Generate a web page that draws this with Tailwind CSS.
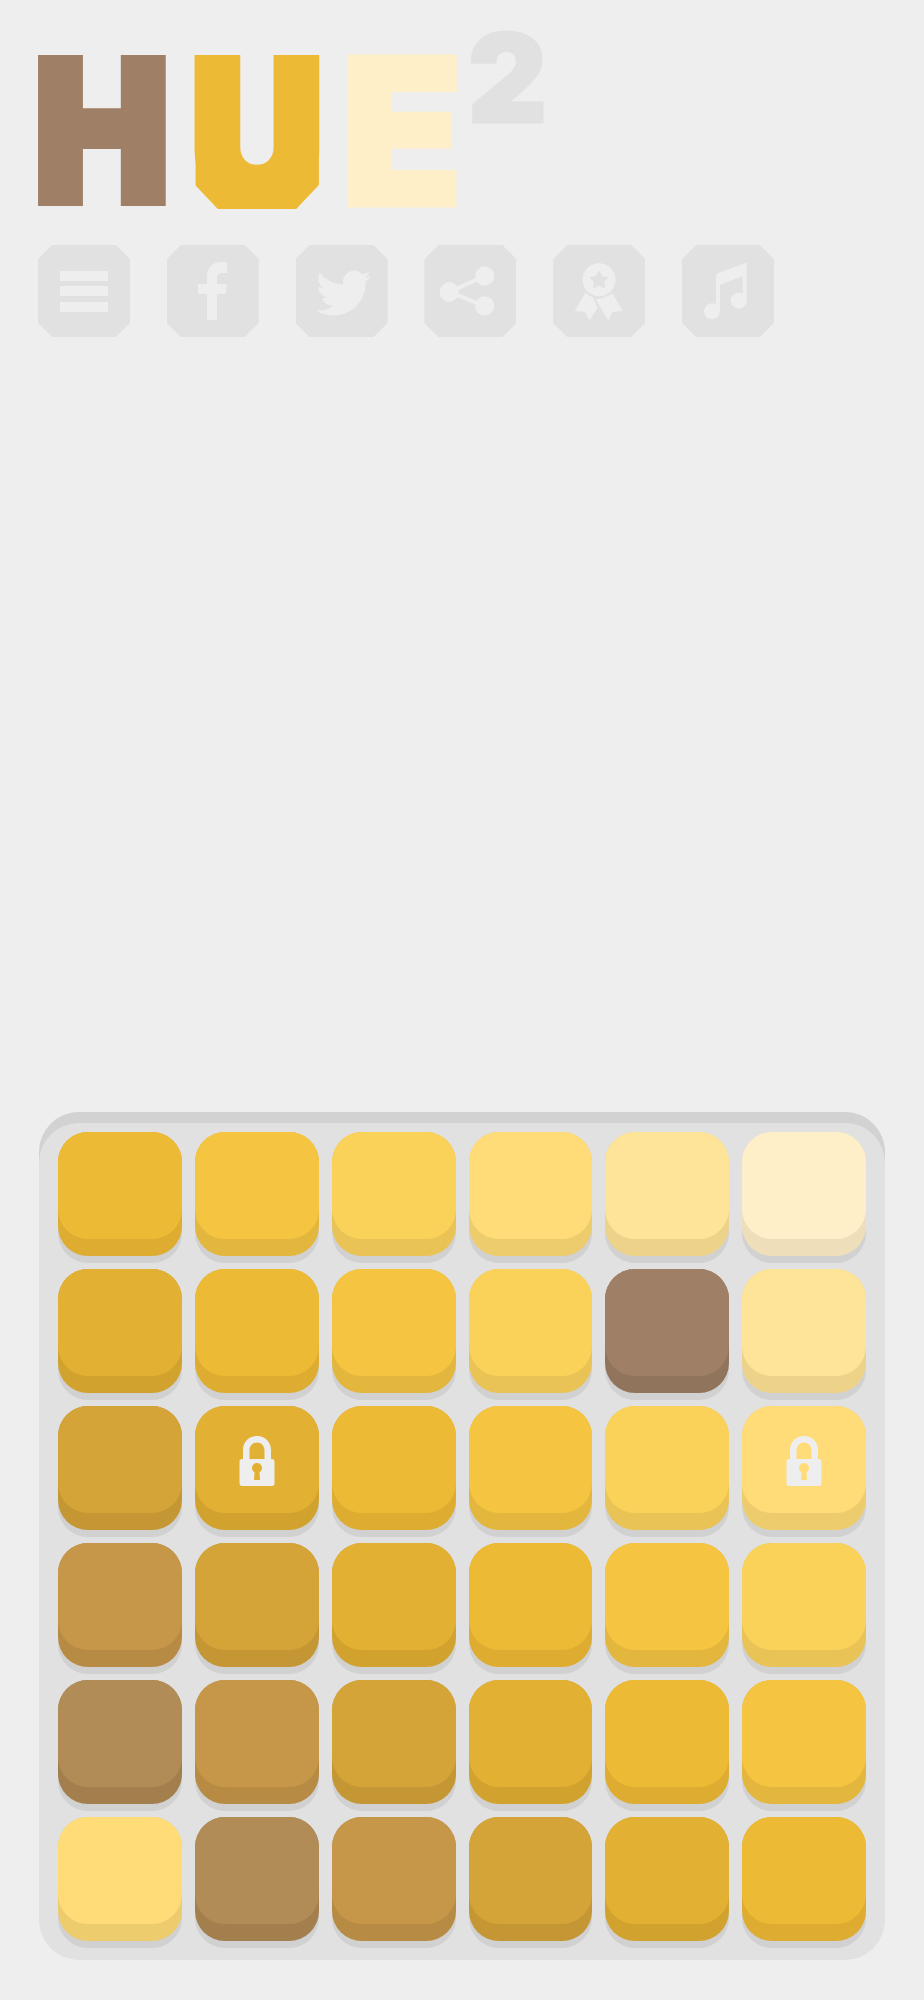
<!DOCTYPE html>
<html lang="en">
<head>
    <meta charset="UTF-8">
    <meta name="viewport" content="width=device-width, initial-scale=1.0">
    <title>Hue 2</title>
    <script src="https://cdn.jsdelivr.net/npm/@tailwindcss/browser@4"></script>
</head>
<body class="bg-[#eeeeee] font-['Inter',sans-serif]">
    <div class="h-[2000px] flex flex-col overflow-hidden">
        <!-- Logo -->
        <div class="flex items-start pt-[32px] pl-[38px] h-[245px] font-black leading-none">
            <div class="flex mt-[23px] h-[152px] text-[194px] leading-[152px]">
                <span class="w-[128px] flex justify-center scale-x-[.93] [-webkit-text-stroke-width:10px] text-[#9f7f66]">H</span>
                <span class="relative w-[124px] ml-[29px] flex justify-center scale-x-[.945] [-webkit-text-stroke-width:10px] text-[#edba35]">U<span class="absolute -left-[3.5px] -right-[3.5px] -bottom-[2px] h-[73px] bg-[#edba35] [clip-path:polygon(0_0,30px_0,30px_36px,calc(100%-30px)_36px,calc(100%-30px)_0,100%_0,100%_49px,calc(100%-24px)_100%,24px_100%,0_49px)]"></span></span>
                <span class="w-[108px] ml-[29px] flex justify-center text-[204px] scale-x-[.97] [-webkit-text-stroke-width:5px] text-[#feefc9]">E</span>
            </div>
            <span class="w-[73px] ml-[15px] h-[92px] flex justify-center text-[122px] leading-[92px] [-webkit-text-stroke-width:3px] text-[#e1e1e1]">2</span>
        </div>

        <!-- Icon buttons -->
        <nav class="flex gap-[36.8px] pl-[38px] text-[#eeeeee]">
            <div class="w-[92px] h-[92px] bg-[#e1e1e1] [clip-path:polygon(14px_0,78px_0,92px_14px,92px_78px,78px_92px,14px_92px,0_78px,0_14px)]">
                <svg viewBox="0 0 92 92" class="w-full h-full" fill="currentColor"><path d="M22 26h48v10H22zM22 41h48v10H22zM22 57h48v10H22z"/></svg>
            </div>
            <div class="w-[92px] h-[92px] bg-[#e1e1e1] [clip-path:polygon(14px_0,78px_0,92px_14px,92px_78px,78px_92px,14px_92px,0_78px,0_14px)]">
                <svg viewBox="0 0 92 92" class="w-full h-full" fill="currentColor"><path d="M40 75V49h-9V39h9v-7c0-10 6-15 14-15h6v11h-5c-4 0-5 2-5 5v6h10l-1.500 10H50v26z"/></svg>
            </div>
            <div class="w-[92px] h-[92px] bg-[#e1e1e1] [clip-path:polygon(14px_0,78px_0,92px_14px,92px_78px,78px_92px,14px_92px,0_78px,0_14px)]">
                <svg viewBox="0 0 92 92" class="w-full h-full" fill="currentColor"><path transform="translate(20 20.500) scale(2.300)" d="M23.953 4.570a10 10 0 01-2.825.775 4.958 4.958 0 002.163-2.723c-.951.555-2.005.959-3.127 1.184a4.920 4.920 0 00-8.384 4.482C7.690 8.095 4.067 6.130 1.640 3.162a4.822 4.822 0 00-.666 2.475c0 1.710.870 3.213 2.188 4.096a4.904 4.904 0 01-2.228-.616v.060a4.923 4.923 0 003.946 4.827 4.996 4.996 0 01-2.212.085 4.936 4.936 0 004.604 3.417 9.867 9.867 0 01-6.102 2.105c-.390 0-.779-.023-1.170-.067a13.995 13.995 0 007.557 2.209c9.053 0 13.998-7.496 13.998-13.985 0-.210 0-.420-.015-.630A9.935 9.935 0 0024 4.590z"/></svg>
            </div>
            <div class="w-[92px] h-[92px] bg-[#e1e1e1] [clip-path:polygon(14px_0,78px_0,92px_14px,92px_78px,78px_92px,14px_92px,0_78px,0_14px)]">
                <svg viewBox="0 0 92 92" class="w-full h-full" fill="currentColor"><circle cx="25.300" cy="47" r="9.700"/><circle cx="60.700" cy="31" r="9.700"/><circle cx="60.700" cy="61" r="9.700"/><path d="M25.300 47L60.700 31M25.300 47L60.700 61" stroke="currentColor" stroke-width="4"/></svg>
            </div>
            <div class="w-[92px] h-[92px] bg-[#e1e1e1] [clip-path:polygon(14px_0,78px_0,92px_14px,92px_78px,78px_92px,14px_92px,0_78px,0_14px)]">
                <svg viewBox="0 0 92 92" class="w-full h-full" fill="currentColor">
                    <circle cx="46" cy="34.700" r="16.500"/>
                    <path d="M46 27l2.400 5 5.400.700-3.900 3.800 1 5.400L46 39.300 41.100 41.900l1-5.400-3.900-3.800 5.400-.700z" fill="#e1e1e1" stroke="#e1e1e1" stroke-width="2" stroke-linejoin="round"/>
                    <path d="M32.700 48c2 2.500 5 4 7.300 5l4 10-7.300 11.700-5-8.400-9.400-.600z" stroke="currentColor" stroke-linejoin="round"/>
                    <path d="M43.300 54.700c6-1 11-2.500 16-5.700l10 16.700-10 .600-4 8.400z" stroke="currentColor" stroke-linejoin="round"/>
                </svg>
            </div>
            <div class="w-[92px] h-[92px] bg-[#e1e1e1] [clip-path:polygon(14px_0,78px_0,92px_14px,92px_78px,78px_92px,14px_92px,0_78px,0_14px)]">
                <svg viewBox="0 0 92 92" class="w-full h-full" fill="currentColor"><circle cx="30" cy="66.300" r="8"/><circle cx="56.700" cy="55.700" r="8"/><path d="M34 29L63 18q1.700-.500 1.700 1.500V56h-4V31.300L38 39.700V66h-4z"/></svg>
            </div>
        </nav>

        <!-- Board -->
        <div class="mt-auto mb-[40px] ml-[39px] w-[846px] rounded-[40px] bg-[#e1e1e1] shadow-[inset_0_11px_0_#d2d2d2] pt-[20px] px-[19px] pb-[19px]">
            <div class="grid grid-cols-6 gap-[13px]">
                <!-- Row 1 -->
                <div class="h-[124px] rounded-[30px] bg-[#ddac30] shadow-[0_7px_0_#d1d1d1]"><div class="h-[107px] rounded-[30px] bg-[#edba35]"></div></div>
                <div class="h-[124px] rounded-[30px] bg-[#e3b63e] shadow-[0_7px_0_#d1d1d1]"><div class="h-[107px] rounded-[30px] bg-[#f5c541]"></div></div>
                <div class="h-[124px] rounded-[30px] bg-[#e9c355] shadow-[0_7px_0_#d1d1d1]"><div class="h-[107px] rounded-[30px] bg-[#fad25a]"></div></div>
                <div class="h-[124px] rounded-[30px] bg-[#edcc6e] shadow-[0_7px_0_#d1d1d1]"><div class="h-[107px] rounded-[30px] bg-[#ffdc78]"></div></div>
                <div class="h-[124px] rounded-[30px] bg-[#edd38a] shadow-[0_7px_0_#d1d1d1]"><div class="h-[107px] rounded-[30px] bg-[#fee498]"></div></div>
                <div class="h-[124px] rounded-[30px] bg-[#eedfba] shadow-[0_7px_0_#d1d1d1]"><div class="h-[107px] rounded-[30px] bg-[#feefc9]"></div></div>
                <!-- Row 2 -->
                <div class="h-[124px] rounded-[30px] bg-[#d1a22e] shadow-[0_7px_0_#d1d1d1]"><div class="h-[107px] rounded-[30px] bg-[#e2b033]"></div></div>
                <div class="h-[124px] rounded-[30px] bg-[#ddac30] shadow-[0_7px_0_#d1d1d1]"><div class="h-[107px] rounded-[30px] bg-[#edba35]"></div></div>
                <div class="h-[124px] rounded-[30px] bg-[#e3b63e] shadow-[0_7px_0_#d1d1d1]"><div class="h-[107px] rounded-[30px] bg-[#f5c541]"></div></div>
                <div class="h-[124px] rounded-[30px] bg-[#e9c355] shadow-[0_7px_0_#d1d1d1]"><div class="h-[107px] rounded-[30px] bg-[#fad25a]"></div></div>
                <div class="h-[124px] rounded-[30px] bg-[#91745c] shadow-[0_7px_0_#d1d1d1]"><div class="h-[107px] rounded-[30px] bg-[#9f7f66]"></div></div>
                <div class="h-[124px] rounded-[30px] bg-[#edd38a] shadow-[0_7px_0_#d1d1d1]"><div class="h-[107px] rounded-[30px] bg-[#fee498]"></div></div>
                <!-- Row 3 -->
                <div class="h-[124px] rounded-[30px] bg-[#c49634] shadow-[0_7px_0_#d1d1d1]"><div class="h-[107px] rounded-[30px] bg-[#d4a439]"></div></div>
                <div class="h-[124px] rounded-[30px] bg-[#d1a22e] shadow-[0_7px_0_#d1d1d1]">
                    <div class="h-[107px] rounded-[30px] bg-[#e2b033] flex justify-center pt-[30px] text-[#eeeeee]">
                        <svg viewBox="0 0 36 50" class="w-[36px] h-[50px]" fill="currentColor"><path fill-rule="evenodd" d="M4 23V14C4 6 10 0 18 0s14 6 14 14v9h1c1.500 0 2.500 1 2.500 2.500v22c0 1.500-1 2.500-2.500 2.500H3c-1.500 0-2.500-1-2.500-2.500v-22C.5 24 1.500 23 3 23zM10.500 23h15v-8.500c0-4.500-3.300-8-7.500-8s-7.500 3.500-7.500 8zM18 27c-2.800 0-5 2.200-5 5 0 1.800 1 3.400 2.500 4.300L15 44h6l-.5-7.700c1.500-.9 2.500-2.500 2.500-4.300 0-2.800-2.200-5-5-5z"/></svg>
                    </div>
                </div>
                <div class="h-[124px] rounded-[30px] bg-[#ddac30] shadow-[0_7px_0_#d1d1d1]"><div class="h-[107px] rounded-[30px] bg-[#edba35]"></div></div>
                <div class="h-[124px] rounded-[30px] bg-[#e3b63e] shadow-[0_7px_0_#d1d1d1]"><div class="h-[107px] rounded-[30px] bg-[#f5c541]"></div></div>
                <div class="h-[124px] rounded-[30px] bg-[#e9c355] shadow-[0_7px_0_#d1d1d1]"><div class="h-[107px] rounded-[30px] bg-[#fad25a]"></div></div>
                <div class="h-[124px] rounded-[30px] bg-[#edcc6e] shadow-[0_7px_0_#d1d1d1]">
                    <div class="h-[107px] rounded-[30px] bg-[#ffdc78] flex justify-center pt-[30px] text-[#eeeeee]">
                        <svg viewBox="0 0 36 50" class="w-[36px] h-[50px]" fill="currentColor"><path fill-rule="evenodd" d="M4 23V14C4 6 10 0 18 0s14 6 14 14v9h1c1.500 0 2.500 1 2.500 2.500v22c0 1.500-1 2.500-2.500 2.500H3c-1.500 0-2.500-1-2.500-2.500v-22C.5 24 1.500 23 3 23zM10.500 23h15v-8.500c0-4.500-3.300-8-7.500-8s-7.500 3.500-7.500 8zM18 27c-2.800 0-5 2.200-5 5 0 1.800 1 3.400 2.500 4.300L15 44h6l-.5-7.700c1.500-.9 2.500-2.500 2.500-4.300 0-2.800-2.200-5-5-5z"/></svg>
                    </div>
                </div>
                <!-- Row 4 -->
                <div class="h-[124px] rounded-[30px] bg-[#b78b43] shadow-[0_7px_0_#d1d1d1]"><div class="h-[107px] rounded-[30px] bg-[#c69749]"></div></div>
                <div class="h-[124px] rounded-[30px] bg-[#c49634] shadow-[0_7px_0_#d1d1d1]"><div class="h-[107px] rounded-[30px] bg-[#d4a439]"></div></div>
                <div class="h-[124px] rounded-[30px] bg-[#d1a22e] shadow-[0_7px_0_#d1d1d1]"><div class="h-[107px] rounded-[30px] bg-[#e2b033]"></div></div>
                <div class="h-[124px] rounded-[30px] bg-[#ddac30] shadow-[0_7px_0_#d1d1d1]"><div class="h-[107px] rounded-[30px] bg-[#edba35]"></div></div>
                <div class="h-[124px] rounded-[30px] bg-[#e3b63e] shadow-[0_7px_0_#d1d1d1]"><div class="h-[107px] rounded-[30px] bg-[#f5c541]"></div></div>
                <div class="h-[124px] rounded-[30px] bg-[#e9c355] shadow-[0_7px_0_#d1d1d1]"><div class="h-[107px] rounded-[30px] bg-[#fad25a]"></div></div>
                <!-- Row 5 -->
                <div class="h-[124px] rounded-[30px] bg-[#a47f4e] shadow-[0_7px_0_#d1d1d1]"><div class="h-[107px] rounded-[30px] bg-[#b28c57]"></div></div>
                <div class="h-[124px] rounded-[30px] bg-[#b78b43] shadow-[0_7px_0_#d1d1d1]"><div class="h-[107px] rounded-[30px] bg-[#c69749]"></div></div>
                <div class="h-[124px] rounded-[30px] bg-[#c49634] shadow-[0_7px_0_#d1d1d1]"><div class="h-[107px] rounded-[30px] bg-[#d4a439]"></div></div>
                <div class="h-[124px] rounded-[30px] bg-[#d1a22e] shadow-[0_7px_0_#d1d1d1]"><div class="h-[107px] rounded-[30px] bg-[#e2b033]"></div></div>
                <div class="h-[124px] rounded-[30px] bg-[#ddac30] shadow-[0_7px_0_#d1d1d1]"><div class="h-[107px] rounded-[30px] bg-[#edba35]"></div></div>
                <div class="h-[124px] rounded-[30px] bg-[#e3b63e] shadow-[0_7px_0_#d1d1d1]"><div class="h-[107px] rounded-[30px] bg-[#f5c541]"></div></div>
                <!-- Row 6 -->
                <div class="h-[124px] rounded-[30px] bg-[#edcc6e] shadow-[0_7px_0_#d1d1d1]"><div class="h-[107px] rounded-[30px] bg-[#ffdc78]"></div></div>
                <div class="h-[124px] rounded-[30px] bg-[#a47f4e] shadow-[0_7px_0_#d1d1d1]"><div class="h-[107px] rounded-[30px] bg-[#b28c57]"></div></div>
                <div class="h-[124px] rounded-[30px] bg-[#b78b43] shadow-[0_7px_0_#d1d1d1]"><div class="h-[107px] rounded-[30px] bg-[#c69749]"></div></div>
                <div class="h-[124px] rounded-[30px] bg-[#c49634] shadow-[0_7px_0_#d1d1d1]"><div class="h-[107px] rounded-[30px] bg-[#d4a439]"></div></div>
                <div class="h-[124px] rounded-[30px] bg-[#d1a22e] shadow-[0_7px_0_#d1d1d1]"><div class="h-[107px] rounded-[30px] bg-[#e2b033]"></div></div>
                <div class="h-[124px] rounded-[30px] bg-[#ddac30] shadow-[0_7px_0_#d1d1d1]"><div class="h-[107px] rounded-[30px] bg-[#edba35]"></div></div>
            </div>
        </div>
    </div>
</body>
</html>
